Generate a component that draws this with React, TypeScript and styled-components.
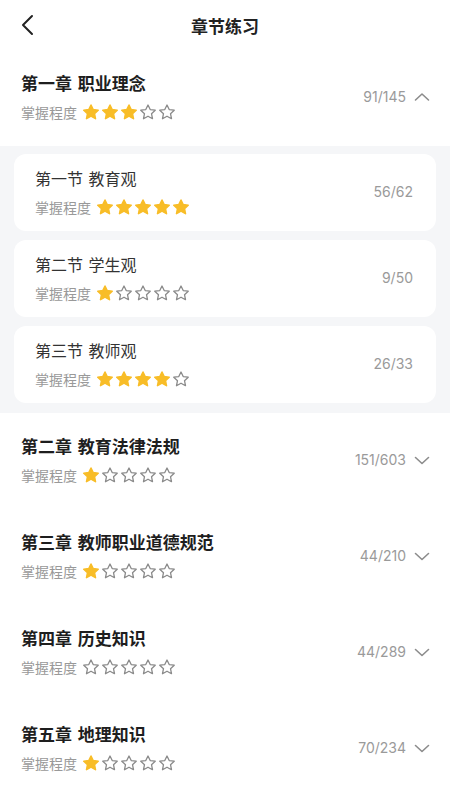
import styled, { createGlobalStyle } from 'styled-components';

const GlobalStyle = createGlobalStyle`
  html, body {
    margin: 0;
    padding: 0;
    background: #ffffff;
    font-family: "Noto Sans CJK SC", "Noto Sans", sans-serif;
  }
`;

type Section = { name: string; stars: number; done: number; total: number };
type Chapter = {
  name: string;
  stars: number;
  done: number;
  total: number;
  open?: boolean;
  sections?: Section[];
};

const chapters: Chapter[] = [
  {
    name: '第一章 职业理念',
    stars: 3,
    done: 91,
    total: 145,
    open: true,
    sections: [
      { name: '第一节 教育观', stars: 5, done: 56, total: 62 },
      { name: '第二节 学生观', stars: 1, done: 9, total: 50 },
      { name: '第三节 教师观', stars: 4, done: 26, total: 33 },
    ],
  },
  { name: '第二章 教育法律法规', stars: 1, done: 151, total: 603 },
  { name: '第三章 教师职业道德规范', stars: 1, done: 44, total: 210 },
  { name: '第四章 历史知识', stars: 0, done: 44, total: 289 },
  { name: '第五章 地理知识', stars: 1, done: 70, total: 234 },
];

const Page = styled.div`
  width: 450px;
  min-height: 800px;
  background: #fff;
`;

const Header = styled.header`
  height: 50px;
  display: flex;
  align-items: center;
  justify-content: center;
  position: relative;
`;

const BackButton = styled.button`
  position: absolute;
  left: 16px;
  top: 13px;
  width: 24px;
  height: 24px;
  padding: 0;
  border: none;
  background: transparent;
  display: flex;
  align-items: center;
  justify-content: center;
`;

const HeaderTitle = styled.h1`
  margin: 0;
  font-size: 17px;
  font-weight: 600;
  color: #222;
`;

const ChapterRow = styled.div`
  display: flex;
  align-items: center;
  justify-content: space-between;
  padding: 21px 20px 24px 21px;
`;

const Info = styled.div`
  display: flex;
  flex-direction: column;
  gap: 7px;
`;

const ChapterName = styled.div`
  font-size: 17px;
  line-height: 24px;
  font-weight: 600;
  color: #1e1e1e;
  word-spacing: 2px;
`;

const SectionName = styled.div`
  font-size: 16px;
  line-height: 24px;
  font-weight: 400;
  color: #333;
  word-spacing: 2px;
`;

const Mastery = styled.div`
  display: flex;
  align-items: center;
  height: 20px;
  gap: 6px;
  font-size: 14px;
  color: #999;
`;

const Stars = styled.div`
  display: flex;
  align-items: center;
  gap: 3px;
`;

const Right = styled.div`
  display: flex;
  align-items: center;
  gap: 8px;
  font-family: Inter, "Noto Sans", sans-serif;
  font-size: 14px;
  color: #9a9a9a;
`;

const SectionPanel = styled.div`
  background: #f5f6f8;
  padding: 8px 14px 10px;
  display: flex;
  flex-direction: column;
  gap: 9px;
`;

const SectionCard = styled.div`
  background: #fff;
  border-radius: 12px;
  padding: 12px 23px 14px 21px;
  display: flex;
  align-items: center;
  justify-content: space-between;
`;

const Star = ({ filled }: { filled: boolean }) => (
  <svg width="16" height="16" viewBox="1.5 1.5 21 21">
    <path
      d="M12 2.8l2.9 6 6.6.8-4.9 4.6 1.3 6.6L12 17.5l-5.9 3.3 1.3-6.6-4.9-4.6 6.6-.8z"
      fill={filled ? '#f8bd28' : 'none'}
      stroke={filled ? '#f8bd28' : '#8a8a8a'}
      strokeWidth={filled ? 2 : 1.7}
      strokeLinejoin="round"
    />
  </svg>
);

const StarRating = ({ value }: { value: number }) => (
  <Stars>
    {[0, 1, 2, 3, 4].map((i) => (
      <Star key={i} filled={i < value} />
    ))}
  </Stars>
);

const Chevron = ({ up }: { up?: boolean }) => (
  <svg width="16" height="16" viewBox="0 0 16 16">
    <path
      d={up ? 'M1.5 11L8 5l6.5 6' : 'M1.5 5.5L8 11.5l6.5-6'}
      fill="none"
      stroke="#8c8c8c"
      strokeWidth="1.6"
      strokeLinecap="round"
      strokeLinejoin="round"
    />
  </svg>
);

export default function App() {
  return (
    <Page>
      <GlobalStyle />
      <Header>
        <BackButton>
          <svg width="24" height="24" viewBox="0 0 24 24">
            <path
              d="M16 3L7 12l9 9"
              fill="none"
              stroke="#222"
              strokeWidth="2"
              strokeLinecap="round"
              strokeLinejoin="round"
            />
          </svg>
        </BackButton>
        <HeaderTitle>章节练习</HeaderTitle>
      </Header>
      {chapters.map((c) => (
        <div key={c.name}>
          <ChapterRow>
            <Info>
              <ChapterName>{c.name}</ChapterName>
              <Mastery>
                掌握程度
                <StarRating value={c.stars} />
              </Mastery>
            </Info>
            <Right>
              {c.done}/{c.total}
              <Chevron up={c.open} />
            </Right>
          </ChapterRow>
          {c.open && c.sections && (
            <SectionPanel>
              {c.sections.map((s) => (
                <SectionCard key={s.name}>
                  <Info>
                    <SectionName>{s.name}</SectionName>
                    <Mastery>
                      掌握程度
                      <StarRating value={s.stars} />
                    </Mastery>
                  </Info>
                  <Right>
                    {s.done}/{s.total}
                  </Right>
                </SectionCard>
              ))}
            </SectionPanel>
          )}
        </div>
      ))}
    </Page>
  );
}
